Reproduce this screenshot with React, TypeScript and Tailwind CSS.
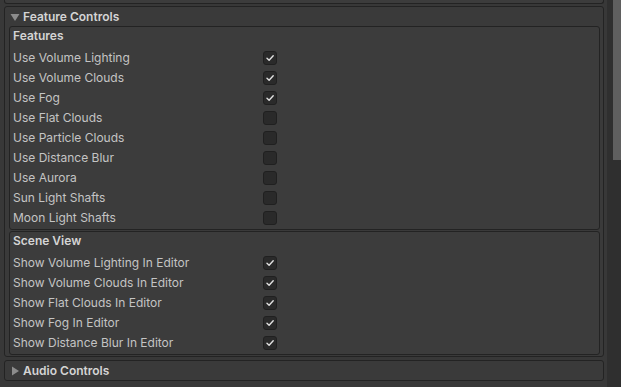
const features: [string, boolean][] = [
  ["Use Volume Lighting", true],
  ["Use Volume Clouds", true],
  ["Use Fog", true],
  ["Use Flat Clouds", false],
  ["Use Particle Clouds", false],
  ["Use Distance Blur", false],
  ["Use Aurora", false],
  ["Sun Light Shafts", false],
  ["Moon Light Shafts", false],
];

const sceneView: [string, boolean][] = [
  ["Show Volume Lighting In Editor", true],
  ["Show Volume Clouds In Editor", true],
  ["Show Flat Clouds In Editor", true],
  ["Show Fog In Editor", true],
  ["Show Distance Blur In Editor", true],
];

const Check = ({ on }: { on: boolean }) => (
  <div className="w-[14px] h-[14px] rounded-[3px] bg-[#2a2a2a] border border-[#202020] flex items-center justify-center">
    {on && (
      <svg width="10" height="10" viewBox="0 0 10 10">
        <path d="M2 5.3 L4.1 7.2 L8.2 2.8" fill="none" stroke="#e2e2e2" strokeWidth="1.4" strokeLinecap="round" strokeLinejoin="round" />
      </svg>
    )}
  </div>
);

const Section = ({ title, rows, className }: { title: string; rows: [string, boolean][]; className?: string }) => (
  <div className={`ml-[4px] mr-[3px] border border-[#232323] rounded-[3px] bg-[#3c3c3c] pb-[1px] ${className ?? ""}`}>
    <div className="h-[21px] pt-[3px] pl-[3px] font-semibold text-[#d4d4d4]">{title}</div>
    {rows.map(([label, on]) => (
      <div key={label} className="h-[20px] flex items-center pl-[3px]">
        <span className="w-[250px] text-[#c4c4c4]">{label}</span>
        <Check on={on} />
      </div>
    ))}
  </div>
);

export default function App() {
  return (
    <div className="w-[621px] h-[387px] bg-[#383838] flex overflow-hidden text-[12px] leading-none" style={{ fontFamily: "Inter, 'Noto Sans', sans-serif" }}>
      <div className="flex-1 flex flex-col pl-[4px] pr-[3px]">
        {/* tail of panel above */}
        <div className="h-[4px] border border-t-0 border-[#232323] rounded-b-[3px] bg-[#3c3c3c]" />

        <div className="mt-[2px] border border-[#232323] rounded-[3px] bg-[#3a3a3a] pb-[1px] flex flex-col">
          <div className="h-[19px] flex items-center pl-[5px] gap-[3px]">
            <svg width="10" height="10" viewBox="0 0 10 10">
              <path d="M0.5 2 L9.5 2 L5 9 Z" fill="#8c8c8c" />
            </svg>
            <span className="font-semibold text-[#d4d4d4]">Feature Controls</span>
          </div>
          <Section title="Features" rows={features} />
          <Section title="Scene View" rows={sceneView} className="mt-[1px]" />
        </div>

        <div className="mt-[3px] h-[21px] border border-[#232323] rounded-[3px] bg-[#3a3a3a] flex items-center pl-[6px] gap-[3px]">
          <svg width="9" height="10" viewBox="0 0 9 10">
            <path d="M1 0.5 L8 5 L1 9.5 Z" fill="#8c8c8c" />
          </svg>
          <span className="font-semibold text-[#d4d4d4]">Audio Controls</span>
        </div>
      </div>

      {/* scrollbar */}
      <div className="w-[14px] bg-[#2f2f2f] flex justify-end">
        <div className="w-[8px] h-[160px] bg-[#5f5f5f]" />
      </div>
    </div>
  );
}
